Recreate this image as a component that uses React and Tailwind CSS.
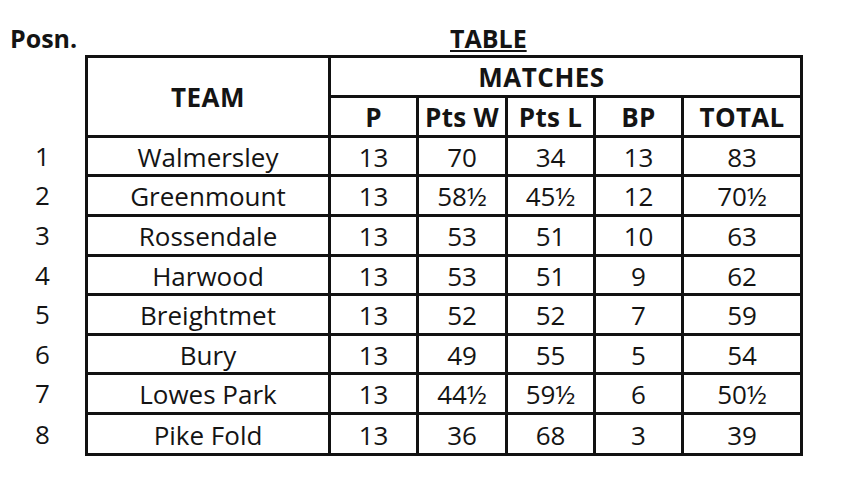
const rows = [
  ["1", "Walmersley", "13", "70", "34", "13", "83"],
  ["2", "Greenmount", "13", "58½", "45½", "12", "70½"],
  ["3", "Rossendale", "13", "53", "51", "10", "63"],
  ["4", "Harwood", "13", "53", "51", "9", "62"],
  ["5", "Breightmet", "13", "52", "52", "7", "59"],
  ["6", "Bury", "13", "49", "55", "5", "54"],
  ["7", "Lowes Park", "13", "44½", "59½", "6", "50½"],
  ["8", "Pike Fold", "13", "36", "68", "3", "39"],
];

const font = { fontFamily: "'Open Sans', Lato, sans-serif" };

export default function App() {
  return (
    <div className="w-[854px] h-[490px] bg-white text-[#141414] overflow-hidden" style={font}>
      <div className="flex pt-[21px] h-[55px]">
        <div className="w-[440px] pl-[10px] text-[25px] leading-[34px] font-bold">Posn.</div>
        <div className="text-[25px] leading-[34px] font-bold underline decoration-2 underline-offset-[2px] ml-[10px]">TABLE</div>
      </div>
      <div className="flex">
        <div className="w-[85px] grid grid-rows-[37px_37px_36px_37px_37px_36px_37px_36px_37px_38px] gap-y-[3px] py-[3px] text-[26px]">
          <div />
          <div />
          {rows.map((r) => (
            <div key={r[0]} className="flex items-center justify-center">{r[0]}</div>
          ))}
        </div>
        <div className="w-[718px] bg-[#111] p-[3px] grid grid-cols-[240px_85px_86px_85px_85px_116px] grid-rows-[37px_37px_36px_37px_37px_36px_37px_36px_37px_38px] gap-[3px] text-[26px]">
          <div className="bg-white row-span-2 flex items-center justify-center font-bold pt-[2px] tracking-[0.5px]">TEAM</div>
          <div className="bg-white col-span-5 flex items-center justify-center font-bold pt-[2px] pr-[48px] tracking-[0.5px]">MATCHES</div>
          {["P", "Pts W", "Pts L", "BP", "TOTAL"].map((h) => (
            <div key={h} className="bg-white flex items-center justify-center font-bold pt-[2px] whitespace-nowrap tracking-[0.3px]">{h}</div>
          ))}
          {rows.map((r) =>
            r.slice(1).map((c, i) => (
              <div key={r[0] + "-" + i} className="bg-white flex items-center justify-center pt-[2px]">{c}</div>
            ))
          )}
        </div>
      </div>
    </div>
  );
}
